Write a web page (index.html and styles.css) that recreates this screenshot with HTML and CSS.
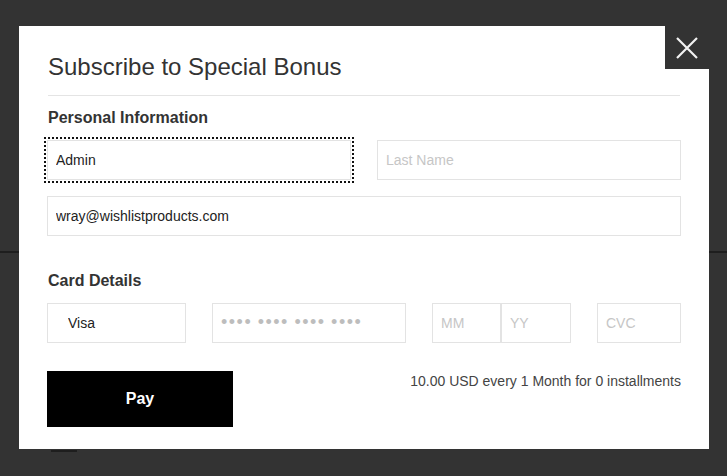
FILE: index.html
```html
<!DOCTYPE html>
<html lang="en">
<head>
<meta charset="UTF-8" />
<title>Subscribe to Special Bonus</title>
<link rel="stylesheet" href="styles.css">
</head>
<body>

<div class="page">
  <div class="page-top"></div>
  <div class="page-bottom"><span class="page-tab"></span></div>
</div>

<div class="overlay">
  <form class="modal" onsubmit="return false">
    <button type="button" class="close" aria-label="Close">
      <svg width="22" height="22" viewBox="0 0 22 22">
        <path d="M1 1 L21 21 M21 1 L1 21" stroke="#f2f2f2" stroke-width="2.2" fill="none" />
      </svg>
    </button>

    <h1 class="modal-title">Subscribe to Special Bonus</h1>

    <h3 class="section-title">Personal Information</h3>
    <div class="row two">
      <input class="field is-focused" type="text" value="Admin">
      <input class="field" type="text" placeholder="Last Name">
    </div>
    <div class="row email-row">
      <input class="field" type="email" value="wray@wishlistproducts.com">
    </div>

    <h3 class="section-title card-title">Card Details</h3>
    <div class="card-row">
      <select class="field card-type"><option>Visa</option></select>
      <input class="field card-number" type="text" placeholder="•••• •••• •••• ••••">
      <div class="expiry">
        <input class="field" type="text" placeholder="MM">
        <input class="field" type="text" placeholder="YY">
      </div>
      <input class="field" type="text" placeholder="CVC">
    </div>

    <div class="pay-row">
      <button type="submit" class="pay">Pay</button>
      <p class="summary">10.00 USD every 1 Month for 0 installments</p>
    </div>
  </form>
</div>

</body>
</html>
```

FILE: styles.css
```css
html, body {
  margin: 0;
  height: 100%;
}
body {
  font-family: "Liberation Sans", Arial, sans-serif;
  background: #333;
  color: #333;
  font-size: 14px;
  overflow: hidden;
}

/* dimmed page behind the popup */
.page-top {
  height: 251px;
  border-bottom: 2px solid #1e1e1e;
}
.page-bottom {
  padding: 197px 0 0 51px;
}
.page-tab {
  display: block;
  width: 26px;
  height: 2px;
  background: #1e1e1e;
}

.overlay {
  position: fixed;
  top: 0;
  left: 0;
  right: 0;
  bottom: 0;
  padding: 26px 0 0 19px;
}
.modal {
  position: relative;
  width: 690px;
  box-sizing: border-box;
  padding: 27px 28px 22px 28px;
  background: #fff;
}
.close {
  position: absolute;
  top: 0;
  right: 0;
  width: 44px;
  height: 43px;
  padding: 0;
  border: 0;
  background: #333;
  display: flex;
  align-items: center;
  justify-content: center;
  cursor: pointer;
}
.close svg {
  display: block;
}

.modal-title {
  margin: 0 1px;
  padding-bottom: 14px;
  border-bottom: 1px solid #e4e4e4;
  font-size: 24px;
  line-height: 28px;
  font-weight: normal;
  color: #333;
}
.section-title {
  margin: 12px 0 12px 1px;
  font-size: 16px;
  line-height: 20px;
  font-weight: bold;
  color: #333;
}
.card-title {
  margin-top: 35px;
}

.field {
  display: block;
  width: 100%;
  height: 40px;
  box-sizing: border-box;
  margin: 0;
  padding: 0 8px;
  border: 1px solid #e3e3e3;
  border-radius: 0;
  background: #fff;
  font-family: inherit;
  font-size: 14px;
  color: #222;
  outline: none;
}
.field::placeholder {
  color: #c6c6c6;
}
.is-focused {
  outline: 2px dotted #111;
  outline-offset: 1px;
}

.row.two {
  display: grid;
  grid-template-columns: 1fr 1fr;
  gap: 26px;
}
.email-row {
  margin-top: 16px;
}

.card-row {
  display: grid;
  grid-template-columns: 139px 194px 139px 84px;
  gap: 26px;
}
.card-type {
  appearance: none;
  -webkit-appearance: none;
  padding-left: 20px;
}
.card-number::placeholder {
  color: #bdbdbd;
  font-size: 18px;
  letter-spacing: 1.5px;
  word-spacing: -1px;
}
.expiry {
  display: grid;
  grid-template-columns: 69px 70px;
}

.pay-row {
  margin-top: 28px;
  display: flex;
  justify-content: space-between;
  align-items: flex-start;
}
.pay {
  width: 186px;
  height: 56px;
  border: 0;
  background: #000;
  color: #fff;
  font-family: inherit;
  font-size: 16px;
  font-weight: bold;
  cursor: pointer;
}
.summary {
  margin: 0;
  line-height: 20px;
  font-size: 14px;
  color: #444;
}
```
